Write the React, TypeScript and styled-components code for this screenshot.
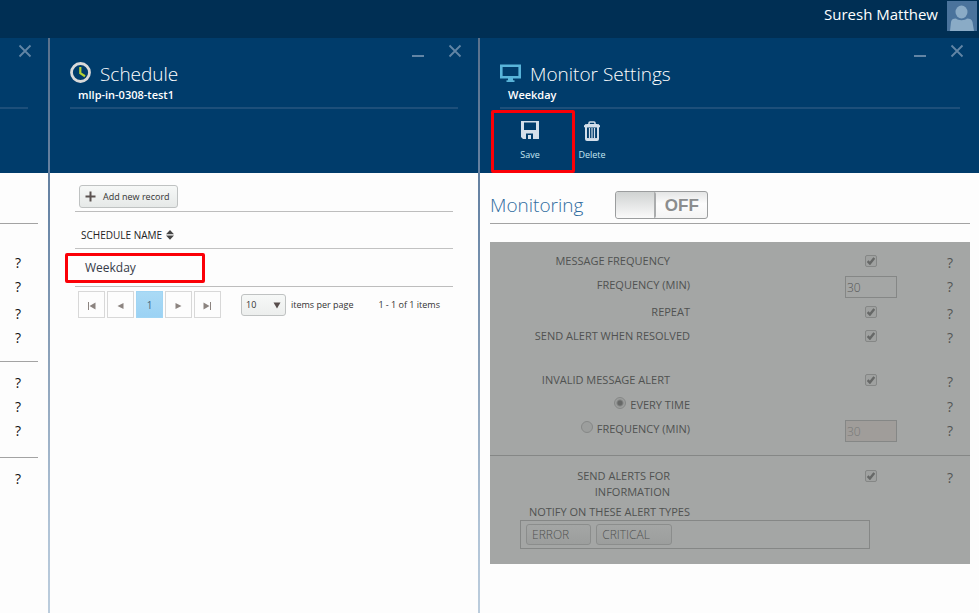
import React from 'react';
import styled, { createGlobalStyle, css } from 'styled-components';

const GlobalStyle = createGlobalStyle`
  * { box-sizing: border-box; }
  body {
    margin: 0;
    background: #fdfdfd;
    font-family: "Open Sans", "Noto Sans", sans-serif;
    font-size: 12px;
    color: #222;
  }
  button, input, select { font-family: inherit; }
`;

const Page = styled.div`
  display: flex;
  flex-direction: column;
  min-height: 100vh;
`;

const TopBar = styled.header`
  display: flex;
  justify-content: flex-end;
  align-items: flex-start;
  gap: 9px;
  height: 38px;
  padding: 1px 2px 0 0;
  background: #002f54;
`;

const UserName = styled.span`
  color: #fff;
  font-size: 15px;
  line-height: 27px;
`;

const Blades = styled.main`
  flex: 1;
  display: grid;
  grid-template-columns: 48px 2px minmax(0, 428fr) 2px minmax(0, 499fr);
`;

const Divider = styled.div`
  background: linear-gradient(#5a728d, #6885a6 30%, #8ba1b9 55%, #b0c3d6 85%, #bccddd);
`;

const BladeHeader = styled.header<{ $kind?: 'compact' | 'last' }>`
  height: 135px;
  padding: 0 20px;
  background: #003c6b;
  color: #fff;
  ${(p) => p.$kind === 'compact' && css`padding-left: 0;`}
  ${(p) => p.$kind === 'last' && css`padding-right: 19px;`}
`;

const WindowControls = styled.div`
  display: flex;
  justify-content: flex-end;
  gap: 23px;
  height: 19px;
  padding-top: 6px;
  margin-right: -4px;
`;

const ControlButton = styled.button`
  width: 14px;
  height: 14px;
  padding: 0;
  border: 0;
  background: none;
  color: #6285a5;
  svg { display: block; }
`;

const TitleBlock = styled.div`
  height: 52px;
  border-bottom: 2px solid #1d4f7a;
`;

const TitleRow = styled.div`
  display: flex;
  align-items: center;
  gap: 8px;
  height: 31px;
`;

const Title = styled.h1`
  margin: 0;
  font-size: 19px;
  font-weight: 300;
  line-height: 30px;
  padding-top: 2px;
`;

const Subtitle = styled.div`
  padding-left: 8px;
  font-size: 11px;
  font-weight: 600;
  line-height: 14px;
`;

const Commands = styled.div`
  display: flex;
  gap: 2px;
  height: 64px;
`;

const Command = styled.button`
  position: relative;
  display: flex;
  flex-direction: column;
  align-items: center;
  gap: 5px;
  width: 60px;
  padding: 12px 0 0;
  border: 0;
  background: none;
  color: #c4e6f2;
  font-size: 9px;
  line-height: 18px;
`;

const Highlight = styled.span<{ $area: 'command' | 'row' }>`
  position: absolute;
  border: 3px solid #fb0007;
  border-radius: 2px;
  pointer-events: none;
  ${(p) =>
    p.$area === 'command'
      ? css`inset: 1px -15px 0 -9px;`
      : css`top: 4px; left: -10px; width: 140px; height: 30px;`}
`;

const Rule = styled.hr`
  margin: 0;
  border: 0;
  border-top: 1px solid #a3a3a3;
`;

const HelpPanel = styled.div`
  padding: 50px 10px 0 0;
`;

const HelpGroup = styled.div<{ $first?: boolean }>`
  display: grid;
  justify-items: end;
  padding: ${(p) => (p.$first ? '27px 10px 11px 0' : '9px 10px 14px 0')};
`;

const HelpButton = styled.button<{ $spaced?: boolean; $dim?: boolean }>`
  width: 20px;
  height: 24px;
  margin-top: ${(p) => (p.$spaced ? '3px' : '0')};
  padding: 0;
  border: 0;
  background: none;
  color: ${(p) => (p.$dim ? '#535554' : '#111')};
  font-size: 14px;
  line-height: 24px;
  text-align: center;
`;

const ScheduleBody = styled.section`
  padding: 12px 25px 0;
`;

const Toolbar = styled.div`
  height: 27px;
  padding-left: 4px;
  border-bottom: 1px solid #bdbdbd;
`;

const AddButton = styled.button`
  display: flex;
  align-items: center;
  gap: 7px;
  height: 23px;
  padding: 0 7px 0 5px;
  border: 1px solid #bfc2c2;
  border-radius: 3px;
  background: linear-gradient(#f6f8f7, #e6e9e8);
  color: #333;
  font-size: 9px;
  white-space: nowrap;
`;

const Grid = styled.table`
  width: 100%;
  border-collapse: collapse;
  th {
    height: 36px;
    padding: 10px 6px 0;
    border-bottom: 1px solid #c2c2c2;
    color: #222;
    font-size: 10px;
    font-weight: 400;
    text-align: left;
  }
  td {
    position: relative;
    height: 38px;
    padding: 0 10px;
    border-bottom: 1px solid #bdbdbd;
    color: #363b48;
    font-size: 12px;
  }
`;

const SortButton = styled.button`
  display: flex;
  align-items: center;
  gap: 4px;
  padding: 0;
  border: 0;
  background: none;
  color: inherit;
  font-size: 10px;
`;

const Pager = styled.nav`
  display: flex;
  align-items: center;
  padding: 3px 13px 0 3px;
  color: #333;
  font-size: 9px;
  line-height: 30px;
  white-space: nowrap;
`;

const PageButtons = styled.div`
  display: flex;
  gap: 2px;
`;

const PageButton = styled.button<{ $current?: boolean }>`
  display: grid;
  place-items: center;
  width: 27px;
  height: 27px;
  padding: 0;
  border: 1px solid ${(p) => (p.$current ? '#a0d5f4' : '#d8d8d8')};
  background: ${(p) => (p.$current ? 'linear-gradient(#aadaf5, #9bd2f4)' : '#fdfdfd')};
  color: ${(p) => (p.$current ? '#46667a' : '#8c8480')};
  font-size: 10px;
  svg { margin-top: 2px; }
`;

const PageSize = styled.label`
  display: flex;
  align-items: center;
  gap: 5px;
  margin-left: 20px;
`;

const SelectBox = styled.span`
  position: relative;
  display: block;
  svg {
    position: absolute;
    top: 8px;
    right: 5px;
    pointer-events: none;
  }
`;

const Select = styled.select`
  appearance: none;
  display: block;
  width: 45px;
  height: 22px;
  padding: 0 4px;
  border: 1px solid #bfc2c2;
  border-radius: 3px;
  background: linear-gradient(#f6f8f7, #eceeed);
  color: #333;
  font-size: 9px;
`;

const PageInfo = styled.span`
  margin-left: auto;
`;

const MonitorBody = styled.section`
  padding: 13px 9px 0 10px;
`;

const SwitchRow = styled.div`
  display: flex;
  align-items: center;
  gap: 32px;
  height: 38px;
  padding-top: 1px;
  border-bottom: 1px solid #a3a3a3;
`;

const SectionTitle = styled.h2`
  margin: 0;
  color: #2f6c9f;
  font-size: 19px;
  font-weight: 300;
  line-height: 28px;
`;

const Switch = styled.button`
  display: flex;
  width: 93px;
  height: 28px;
  padding: 0;
  border: 1px solid #9b9d9e;
  border-radius: 3px;
  background: linear-gradient(#e4e5e5, #fcfcfc 45%, #f4f4f4);
  color: #8b8d8e;
  font: bold 17px/26px "Liberation Sans", Arial, sans-serif;
  overflow: hidden;
`;

const Knob = styled.span`
  width: 40px;
  height: 26px;
  border-right: 2px solid #aaacad;
  border-radius: 2px;
  background: linear-gradient(#d0d3d2, #fafafa);
`;

const SwitchText = styled.span`
  flex: 1;
  line-height: 28px;
  text-align: center;
`;

const Settings = styled.form`
  margin-top: 18px;
  background: #a4a6a5;
  color: #505251;
`;

const SettingGroup = styled.div<{ $last?: boolean }>`
  padding: ${(p) => (p.$last ? '8px 0 15px' : '7px 0 13px')};
  ${(p) => !p.$last && css`border-bottom: 1px solid #858786;`}
`;

const SettingRow = styled.div<{ $gap?: boolean; $input?: boolean; $loose?: boolean }>`
  display: grid;
  grid-template-columns: 200px 1fr 52px 73px;
  align-items: start;
  min-height: ${(p) => (p.$input ? '27px' : '24px')};
  margin-top: ${(p) => (p.$gap ? '20px' : '0')};
  ${(p) => p.$loose && css`padding-top: 1px;`}
  > :last-child {
    justify-self: end;
    margin-right: 10px;
    line-height: 27px;
  }
`;

const SettingLabel = styled.label<{ $parent?: boolean }>`
  display: flex;
  justify-content: flex-end;
  align-items: center;
  gap: 4px;
  padding: 4px ${(p) => (p.$parent ? '20px' : '0')} 4px 30px;
  font-size: 11px;
  line-height: 16px;
  text-align: right;
`;

const ControlCell = styled.div`
  grid-column: 3;
  display: grid;
  justify-items: center;
  padding-top: 6px;
`;

const TickBox = styled.span`
  position: relative;
  display: block;
  width: 12px;
  height: 12px;
  input {
    appearance: none;
    display: block;
    width: 12px;
    height: 12px;
    margin: 0;
    border: 1px solid #858786;
    border-radius: 2px;
    background: #9fa1a0;
  }
  svg {
    position: absolute;
    top: 2px;
    left: 2px;
  }
`;

const Radio = styled.input`
  appearance: none;
  flex: none;
  width: 12px;
  height: 12px;
  margin: 0 0 4px;
  border: 1px solid #868887;
  border-radius: 50%;
  background: #9c9e9d;
  &:checked {
    background: radial-gradient(circle, #666867 0 2px, #9c9e9d 4px);
  }
`;

const NumberBox = styled.input<{ $muted?: boolean }>`
  width: 52px;
  height: 22px;
  margin-top: -3px;
  padding: 0 1px;
  border: 1px solid #858786;
  background: ${(p) => (p.$muted ? '#a09d9a' : '#a4a6a5')};
  color: ${(p) => (p.$muted ? '#777978' : '#555756')};
  font-size: 12px;
  font-weight: 300;
`;

const NotifyLabel = styled.div`
  width: 200px;
  font-size: 11px;
  line-height: 16px;
  text-align: right;
`;

const TagBox = styled.div`
  display: flex;
  gap: 5px;
  height: 29px;
  margin: 0 100px 0 30px;
  padding: 3px 5px;
  border: 1px solid #858786;
`;

const Tag = styled.span`
  height: 21px;
  padding: 0 21px 0 5px;
  border: 1px solid #8b8d8c;
  border-radius: 3px;
  background: linear-gradient(#a4a6a5, #9c9e9d);
  font-size: 12px;
  font-weight: 300;
  line-height: 20px;
`;

const CloseIcon = () => (
  <svg width="14" height="14" viewBox="0 0 14 14" stroke="currentColor" strokeWidth="1.8">
    <path d="M1.5 1.5l11 11M12.5 1.5l-11 11" />
  </svg>
);

const MinimizeIcon = () => (
  <svg width="14" height="14" viewBox="0 0 14 14" fill="currentColor">
    <path d="M1 11h12v2H1z" />
  </svg>
);

const Avatar = () => (
  <svg width="30" height="30" viewBox="0 0 30 30" role="img" aria-label="Profile picture">
    <path fill="#4a739c" d="M0 0h30v30H0z" />
    <ellipse cx="14.5" cy="11" rx="6" ry="6.500" fill="#8aabc6" />
    <path fill="#8aabc6" d="M3 30l1-9c.4-2.500 2-3.500 5-3.500 2 2.300 9 2.300 11 0 3 0 5 1 5.500 3.500L27 30z" />
  </svg>
);

const ClockIcon = () => (
  <svg width="22" height="22" viewBox="0 0 22 22" fill="none">
    <circle cx="10.500" cy="10.500" r="9" stroke="#d9d9d9" strokeWidth="2.800" />
    <path d="M10.300 5v6.200l4.700 3" stroke="#b5d333" strokeWidth="2.200" />
  </svg>
);

const MonitorIcon = () => (
  <svg width="22" height="20" viewBox="0 0 22 20">
    <path d="M1.300 2.800h18.400v11.500H1.300z" fill="none" stroke="#59b4d9" strokeWidth="2.600" />
    <path d="M8 15h5v2.300h1.500V19h-8v-1.700H8z" fill="#59b4d9" />
  </svg>
);

const SaveIcon = () => (
  <svg width="18" height="18" viewBox="0 0 18 18" fill="#d3dfea" fillRule="evenodd">
    <path d="M0 0h18v18H2l-2-2zM3 1.500v7.500h12V1.500zM5 12.500v5.500h2v-4h3v4h2v-5.500z" />
  </svg>
);

const TrashIcon = () => (
  <svg width="18" height="20" viewBox="0 0 18 20" fill="none" stroke="#d3dfea">
    <path d="M6 3.500V2q0-1 1-1h4q1 0 1 1v1.500" strokeWidth="1.500" />
    <path d="M1.500 6V5q0-1.500 2-1.500h11q2 0 2 1.500v1z" fill="#d3dfea" />
    <path d="M3 6v12q0 1 1 1h10q1 0 1-1V6" strokeWidth="2" />
    <path d="M6.500 7v10M9 7v10M11.500 7v10" strokeWidth="1.200" />
    <path d="M4 17.800h10" strokeWidth="1.500" />
  </svg>
);

const IconSlot = styled.span`
  display: grid;
  justify-items: center;
  align-items: start;
  height: 20px;
  svg { display: block; }
`;

const PlusIcon = () => (
  <svg width="11" height="11" viewBox="0 0 11 11" fill="#5b5250">
    <path d="M4.500 0.500h2v4h4v2h-4v4h-2v-4h-4v-2h4z" />
  </svg>
);

const SortIcon = () => (
  <svg width="8" height="10" viewBox="0 0 8 10" fill="#444">
    <path d="M4 0l4 4.200H0zM0 5.500h8L4 9.800z" />
  </svg>
);

const ArrowIcon = ({ d }: { d: string }) => (
  <svg width="9" height="8" viewBox="0 0 9 8" fill="currentColor">
    <path d={d} />
  </svg>
);

const DownIcon = () => (
  <svg width="8" height="7" viewBox="0 0 8 7" fill="#574d4b">
    <path d="M0.500 0.500h7L4 6.500z" />
  </svg>
);

const Controls = ({ minimizable = true }: { minimizable?: boolean }) => (
  <WindowControls>
    {minimizable && (
      <ControlButton aria-label="Minimize"><MinimizeIcon /></ControlButton>
    )}
    <ControlButton aria-label="Close"><CloseIcon /></ControlButton>
  </WindowControls>
);

const Help = ({ spaced, dim }: { spaced?: boolean; dim?: boolean }) => (
  <HelpButton type="button" $spaced={spaced} $dim={dim}>?</HelpButton>
);

const Tick = ({ id }: { id: string }) => (
  <TickBox>
    <input id={id} type="checkbox" defaultChecked disabled />
    <svg width="8" height="8" viewBox="0 0 8 8" fill="none" stroke="#666867" strokeWidth="2.400">
      <path d="M0.700 4.200l2.200 2.300L7.300 0.900" />
    </svg>
  </TickBox>
);

const CheckRow = ({ id, label, parent, gap }: { id: string; label: string; parent?: boolean; gap?: boolean }) => (
  <SettingRow $gap={gap}>
    <SettingLabel htmlFor={id} $parent={parent}>{label}</SettingLabel>
    <ControlCell><Tick id={id} /></ControlCell>
    <Help dim />
  </SettingRow>
);

export default function App() {
  return (
    <Page>
      <GlobalStyle />
      <TopBar>
        <UserName>Suresh Matthew</UserName>
        <Avatar />
      </TopBar>
      <Blades>
        <div>
          <BladeHeader $kind="compact">
            <Controls minimizable={false} />
            <TitleBlock />
          </BladeHeader>
          <HelpPanel>
            <Rule />
            <HelpGroup $first>
              <Help />
              <Help />
              <Help spaced />
              <Help />
            </HelpGroup>
            <Rule />
            <HelpGroup>
              <Help />
              <Help />
              <Help />
            </HelpGroup>
            <Rule />
            <HelpGroup>
              <Help />
            </HelpGroup>
          </HelpPanel>
        </div>
        <Divider />
        <div>
          <BladeHeader>
            <Controls />
            <TitleBlock>
              <TitleRow><ClockIcon /><Title>Schedule</Title></TitleRow>
              <Subtitle>mllp-in-0308-test1</Subtitle>
            </TitleBlock>
          </BladeHeader>
          <ScheduleBody>
            <Toolbar>
              <AddButton><PlusIcon />Add new record</AddButton>
            </Toolbar>
            <Grid>
              <thead>
                <tr><th><SortButton>SCHEDULE NAME <SortIcon /></SortButton></th></tr>
              </thead>
              <tbody>
                <tr><td>Weekday<Highlight $area="row" /></td></tr>
              </tbody>
            </Grid>
            <Pager>
              <PageButtons>
                <PageButton aria-label="First page"><ArrowIcon d="M1 0h1v8H1zM8.500 0.500v7L2.500 4z" /></PageButton>
                <PageButton aria-label="Previous page"><ArrowIcon d="M7.500 1v6L1.500 4z" /></PageButton>
                <PageButton $current>1</PageButton>
                <PageButton aria-label="Next page"><ArrowIcon d="M1.500 1v6l6-3z" /></PageButton>
                <PageButton aria-label="Last page"><ArrowIcon d="M7 0h1v8H7zM0.500 0.500v7l6-3.500z" /></PageButton>
              </PageButtons>
              <PageSize>
                <SelectBox>
                  <Select defaultValue="10"><option>10</option><option>20</option></Select>
                  <DownIcon />
                </SelectBox>
                items per page
              </PageSize>
              <PageInfo>1 - 1 of 1 items</PageInfo>
            </Pager>
          </ScheduleBody>
        </div>
        <Divider />
        <div>
          <BladeHeader $kind="last">
            <Controls />
            <TitleBlock>
              <TitleRow><MonitorIcon /><Title>Monitor Settings</Title></TitleRow>
              <Subtitle>Weekday</Subtitle>
            </TitleBlock>
            <Commands>
              <Command><IconSlot><SaveIcon /></IconSlot>Save<Highlight $area="command" /></Command>
              <Command><IconSlot><TrashIcon /></IconSlot>Delete</Command>
            </Commands>
          </BladeHeader>
          <MonitorBody>
            <SwitchRow>
              <SectionTitle id="monitoring">Monitoring</SectionTitle>
              <Switch role="switch" aria-checked="false" aria-labelledby="monitoring">
                <Knob /><SwitchText>OFF</SwitchText>
              </Switch>
            </SwitchRow>
            <Settings>
              <SettingGroup>
                <CheckRow id="message" label="MESSAGE FREQUENCY" parent />
                <SettingRow $input>
                  <SettingLabel htmlFor="minutes">FREQUENCY (MIN)</SettingLabel>
                  <ControlCell><NumberBox id="minutes" defaultValue="30" disabled /></ControlCell>
                  <Help dim />
                </SettingRow>
                <CheckRow id="repeat" label="REPEAT" />
                <CheckRow id="resolved" label="SEND ALERT WHEN RESOLVED" />
                <CheckRow id="invalid" label="INVALID MESSAGE ALERT" parent gap />
                <SettingRow $loose>
                  <SettingLabel>
                    <Radio type="radio" name="mode" defaultChecked disabled />EVERY TIME
                  </SettingLabel>
                  <ControlCell />
                  <Help dim />
                </SettingRow>
                <SettingRow>
                  <SettingLabel>
                    <Radio type="radio" name="mode" disabled />FREQUENCY (MIN)
                  </SettingLabel>
                  <ControlCell>
                    <NumberBox aria-label="Invalid message frequency" defaultValue="30" disabled $muted />
                  </ControlCell>
                  <Help dim />
                </SettingRow>
              </SettingGroup>
              <SettingGroup $last>
                <CheckRow id="information" label="SEND ALERTS FOR INFORMATION" parent />
                <NotifyLabel id="types">NOTIFY ON THESE ALERT TYPES</NotifyLabel>
                <TagBox role="group" aria-labelledby="types">
                  <Tag>ERROR</Tag>
                  <Tag>CRITICAL</Tag>
                </TagBox>
              </SettingGroup>
            </Settings>
          </MonitorBody>
        </div>
      </Blades>
    </Page>
  );
}
